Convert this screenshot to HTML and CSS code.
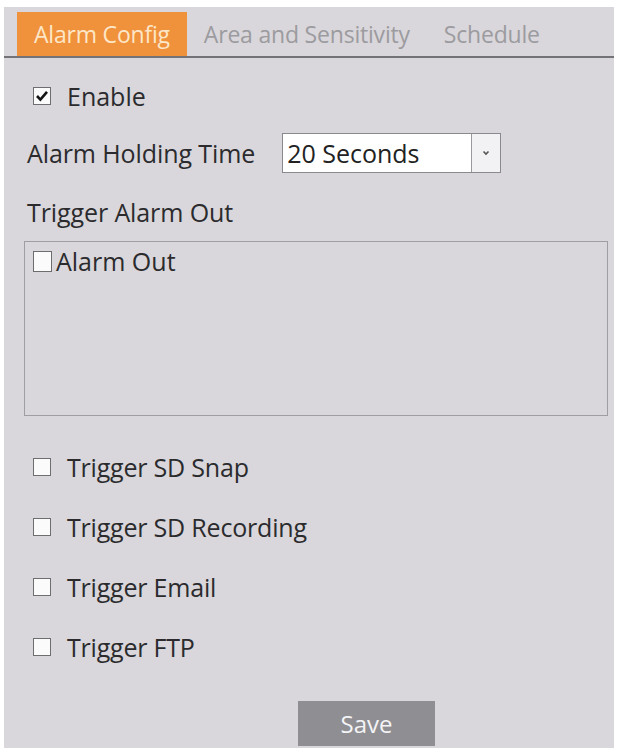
FILE: index.html
```html
<!DOCTYPE html>
<html>
<head>
<meta charset="utf-8">
<link rel="stylesheet" href="styles.css">
</head>
<body>
<div class="panel">
  <div class="tabs">
    <div class="tab active">Alarm Config</div>
    <div class="tab">Area and Sensitivity</div>
    <div class="tab">Schedule</div>
  </div>
  <div class="content">
    <label class="row enable">
      <span class="cb checked"><svg viewBox="0 0 14 14" width="14" height="14"><path d="M2 7 L5.4 10.6 L12 2.8" fill="none" stroke="#151515" stroke-width="2.6"/></svg></span>
      <span>Enable</span>
    </label>
    <div class="row holding">
      <span class="label">Alarm Holding Time</span>
      <div class="select">
        <span class="select-value">20 Seconds</span>
        <span class="select-arrow"><svg viewBox="0 0 10 10" width="10" height="10"><path d="M2.5 3.5 L5 6 L7.5 3.5" fill="none" stroke="#555" stroke-width="1.6"/></svg></span>
      </div>
    </div>
    <div class="section-title">Trigger Alarm Out</div>
    <div class="outbox">
      <label class="out-item"><span class="cb cb-out"></span><span>Alarm Out</span></label>
    </div>
    <div class="triggers">
      <label class="row trig"><span class="cb"></span><span>Trigger SD Snap</span></label>
      <label class="row trig"><span class="cb"></span><span>Trigger SD Recording</span></label>
      <label class="row trig"><span class="cb"></span><span>Trigger Email</span></label>
      <label class="row trig"><span class="cb"></span><span>Trigger FTP</span></label>
    </div>
    <div class="actions">
      <button class="save">Save</button>
    </div>
  </div>
</div>
</body>
</html>
```
FILE: styles.css
```css
html, body {
  margin: 0;
  padding: 0;
  background: #ffffff;
}
body {
  font-family: "Open Sans", "Noto Sans", sans-serif;
  color: #2b2b2e;
}
.panel {
  margin: 7px 4px 0 4px;
  height: 741px;
  background: #d9d7db;
  overflow: hidden;
}
.tabs {
  display: flex;
  align-items: stretch;
  padding: 5px 0 0 13px;
  height: 44px;
  border-bottom: 2px solid #737276;
}
.tab {
  display: flex;
  align-items: center;
  padding: 0 17px;
  font-size: 23px;
  color: #9c9b9f;
  letter-spacing: -0.2px;
}
.tab.active {
  background: #f0913b;
  color: #fde7c8;
}
.content {
  padding: 0 0 0 23px;
  display: flex;
  flex-direction: column;
}
.row {
  display: flex;
  align-items: center;
}
.cb {
  width: 16px;
  height: 16px;
  background: #fbfbfc;
  border: 1px solid #6e6e71;
  display: inline-flex;
  align-items: center;
  justify-content: center;
  flex: none;
}
.enable {
  margin-top: 23px;
  margin-left: 6px;
  font-size: 25px;
  gap: 16px;
  height: 30px;
}
.holding {
  margin-top: 22px;
  font-size: 25px;
  gap: 27px;
  height: 40px;
}
.label {
  letter-spacing: -0.1px;
}
.select {
  display: flex;
  width: 217px;
  height: 38px;
  border: 1px solid #8a898d;
  background: #fff;
}
.select-value {
  flex: 1;
  display: flex;
  align-items: center;
  padding-left: 4px;
  font-size: 25px;
  color: #222;
}
.select-arrow {
  width: 28px;
  border-left: 1px solid #9a999d;
  background: #f2f1f3;
  display: flex;
  align-items: center;
  justify-content: center;
}
.section-title {
  margin-top: 24px;
  font-size: 25px;
  letter-spacing: -0.1px;
  height: 30px;
  line-height: 30px;
}
.outbox {
  margin-top: 14px;
  width: 584px;
  margin-left: -3px;
  height: 175px;
  border: 1px solid #9f9ea2;
  box-sizing: border-box;
  padding: 4px 0 0 8px;
}
.out-item {
  display: flex;
  align-items: center;
  gap: 4px;
  font-size: 25px;
  height: 30px;
}
.cb-out {
  width: 17px;
  height: 19px;
  border-color: #6d6d70;
}
.triggers {
  margin-top: 36px;
  display: flex;
  flex-direction: column;
  gap: 30px;
  margin-left: 6px;
}
.trig {
  font-size: 25px;
  gap: 16px;
  height: 30px;
  letter-spacing: -0.2px;
}
.actions {
  display: flex;
  margin-top: 39px;
  padding-left: 271px;
}
.save {
  width: 137px;
  height: 45px;
  border: none;
  background: #8f8e92;
  color: #f4f4f6;
  font-family: "Open Sans", "Noto Sans", sans-serif;
  font-size: 24px;
  padding: 0;
}
```
